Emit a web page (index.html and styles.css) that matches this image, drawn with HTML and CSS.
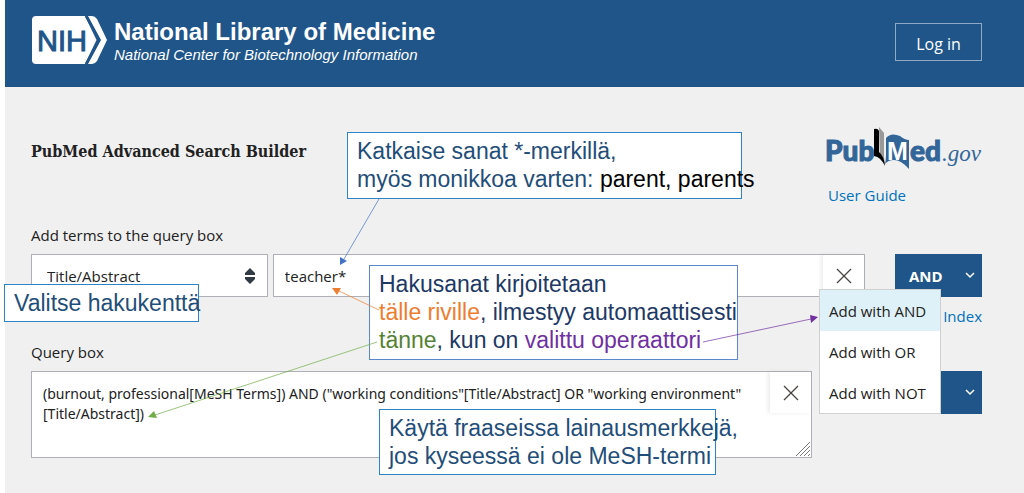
FILE: index.html
```html
<!DOCTYPE html>
<html lang="fi">
<head>
<meta charset="utf-8">
<title>PubMed Advanced Search Builder</title>
<link rel="stylesheet" href="styles.css">
</head>
<body>
<div class="page">

  <header class="header">
    <a class="brand" href="#">
      <svg class="nih-logo" width="75" height="48" viewBox="0 0 75 48" aria-hidden="true">
        <path d="M4 0H53L64.500 24L53 48H4Q0 48 0 44V4Q0 0 4 0Z" fill="#fff"/>
        <path d="M56 0H60Q63 0 65 3L75 24L65 45Q63 48 60 48H56L69 24Z" fill="#fff"/>
        <path d="M54 0L67 24L54 48" fill="none" stroke="#20558a" stroke-width="2.500"/>
        <text class="nih-text" x="5" y="35">NIH</text>
      </svg>
      <span class="brand-text">
        <span class="brand-name">National Library of Medicine</span>
        <span class="brand-sub">National Center for Biotechnology Information</span>
      </span>
    </a>
    <button class="login" type="button">Log in</button>
  </header>

  <main class="content">
    <div class="top">
      <h1>PubMed Advanced Search Builder</h1>
      <div class="pubmed">
        <svg class="pubmed-logo" width="158" height="46" viewBox="0 0 158 46" role="img" aria-label="PubMed.gov">
          <text class="logo-bold" x="1" y="35">Pub</text>
          <path d="M55 1L60 7V31L61 39L56 33Z" fill="#999"/>
          <path d="M50 3Q54 2 55 5V26Q60 30 61 40Q57 31 50 30Z" fill="#000"/>
          <path d="M62 12Q67 6 76 10Q81 14 85 14V43Q77 34 70 34Q64 34 61 38Q62 34 62 29Z" fill="#326699"/>
          <text class="logo-m" x="63" y="34">M</text>
          <text class="logo-bold" x="86" y="35">ed</text>
          <text class="logo-gov" x="118" y="35">.gov</text>
        </svg>
        <a class="guide" href="#">User Guide</a>
      </div>
    </div>

    <label class="label" for="term">Add terms to the query box</label>
    <div class="row">
      <div class="select-box">
        <select class="field" aria-label="Field">
          <option>Title/Abstract</option>
        </select>
        <svg class="sort" width="12" height="16" viewBox="0 0 12 16" aria-hidden="true">
          <path d="M6 0L11 5V7H1V5ZM1 9H11V11L6 16L1 11Z" fill="#323a45"/>
        </svg>
      </div>
      <div class="term-box">
        <input class="field" id="term" type="text" value="teacher*">
        <button class="clear" type="button" aria-label="Clear term">
          <svg width="16" height="16" viewBox="0 0 16 16"><path d="M1 1L15 15M15 1L1 15"/></svg>
        </button>
      </div>
      <div class="operator">
        <button class="blue-button" type="button">
          <span>AND</span>
          <svg class="chevron" width="10" height="7" viewBox="0 0 10 7"><path d="M1 1L5 5L9 1"/></svg>
        </button>
        <div class="menu">
          <button class="active" type="button">Add with AND</button>
          <button type="button">Add with OR</button>
          <button type="button">Add with NOT</button>
        </div>
      </div>
    </div>
    <a class="index" href="#">Index</a>

    <label class="label" for="query">Query box</label>
    <div class="row">
      <div class="query-box">
        <textarea id="query">(burnout, professional[MeSH Terms]) AND ("working conditions"[Title/Abstract] OR "working environment"
[Title/Abstract])</textarea>
        <button class="clear" type="button" aria-label="Clear query">
          <svg width="16" height="16" viewBox="0 0 16 16"><path d="M1 1L15 15M15 1L1 15"/></svg>
        </button>
        <svg class="grip" width="14" height="14" viewBox="0 0 14 14" aria-hidden="true">
          <path d="M0 14L14 0M4 14L14 4M8 14L14 8M12 14L14 12"/>
        </svg>
      </div>
      <button class="blue-button search" type="button" aria-label="Search">
        <svg class="chevron" width="10" height="7" viewBox="0 0 10 7"><path d="M1 1L5 5L9 1"/></svg>
      </button>
    </div>
  </main>

  <!-- ohjetekstit -->
  <div class="note note-field">Valitse hakukenttä</div>
  <div class="note note-truncate">Katkaise sanat *-merkillä,<br>myös monikkoa varten: <span class="black">parent, parents</span></div>
  <div class="note note-terms">Hakusanat kirjoitetaan<br><span class="orange">tälle riville</span>, ilmestyy automaattisesti<br><span class="green">tänne</span>, kun on <span class="purple">valittu operaattori</span></div>
  <div class="note note-phrase">Käytä fraaseissa lainausmerkkejä,<br>jos kyseessä ei ole MeSH-termi</div>

  <!-- nuolet -->
  <svg class="arrows" width="1024" height="493" viewBox="0 0 1024 493" aria-hidden="true">
    <g stroke="#4472c4" fill="#4472c4"><path class="line" d="M379 199L344 259"/><path class="head" d="M340 265L340 257L347 261Z"/></g>
    <g stroke="#ed7d31" fill="#ed7d31"><path class="line" d="M379 310L339 291"/><path class="head" d="M332 288L341 288L337 295Z"/></g>
    <g stroke="#70ad47" fill="#70ad47"><path class="line" d="M377 342L155 415"/><path class="head" d="M148 417L154 411L157 418Z"/></g>
    <g stroke="#7030a0" fill="#7030a0"><path class="line" d="M703 342L811 319"/><path class="head" d="M818 317L810 315L811 323Z"/></g>
  </svg>
</div>
</body>
</html>
```
FILE: styles.css
```css
* {
    box-sizing: border-box;
}
body {
    margin: 0;
    background-color: #fff;
    color: #212121;
    font-family: "Open Sans", sans-serif;
    font-size: 15px;
}
button, input, select, textarea {
    font-family: inherit;
    font-size: inherit;
    color: inherit;
    border-radius: 0;
}
a {
    color: #0071bc;
    text-decoration: none;
}
.page {
    position: relative;
    min-height: 100vh;
    padding-left: 5px;
    background: linear-gradient(to right, #fff 5px, #f0f0f0 5px);
}
.header {
    display: flex;
    justify-content: space-between;
    align-items: flex-start;
    height: 87px;
    padding: 16px 42px 0 27px;
    background-color: #20558a;
}
.brand {
    display: flex;
    gap: 7px;
    color: #fff;
    font-family: "Liberation Sans", Arial, sans-serif;
}
.nih-text {
    fill: #20558a;
    stroke: #20558a;
    stroke-width: 1px;
    font-size: 29px;
}
.brand-text {
    display: flex;
    flex-direction: column;
    padding-top: 3px;
}
.brand-name {
    font-size: 24px;
    font-weight: bold;
    line-height: 26px;
}
.brand-sub {
    font-size: 15px;
    font-style: italic;
    line-height: 20px;
}
.login {
    width: 87px;
    height: 38px;
    margin-top: 7px;
    padding-top: 4px;
    border: 1px solid #90aac5;
    background: none;
    color: #fff;
    font-size: 16px;
}
.content {
    padding: 39px 42px 34px 26px;
}
.top {
    display: flex;
    justify-content: space-between;
    height: 99px;
}
h1 {
    margin: 16px 0 0;
    font-family: "DejaVu Serif Condensed", "DejaVu Serif", serif;
    font-size: 16px;
    line-height: 20px;
}
.pubmed {
    display: flex;
    flex-direction: column;
}
.guide {
    margin-top: 13px;
    padding-left: 4px;
    line-height: 20px;
}
.logo-bold {
    fill: #326699;
    stroke: #326699;
    stroke-width: 1px;
    font-family: Lato, sans-serif;
    font-size: 28px;
    font-weight: 900;
}
.logo-m {
    fill: #fff;
    font-family: "Liberation Sans", Arial, sans-serif;
    font-size: 25px;
    font-weight: bold;
}
.logo-gov {
    fill: #326699;
    font-family: "Liberation Serif", serif;
    font-size: 23px;
    font-style: italic;
}
.label {
    display: block;
    height: 29px;
    line-height: 20px;
}
.row {
    display: flex;
}
.select-box {
    position: relative;
    flex: 2;
    margin-right: 5px;
}
.term-box {
    position: relative;
    flex: 5;
}
.field, textarea {
    display: block;
    width: 100%;
    border: 1px solid #aeb0b5;
    background-color: #fff;
    outline: none;
}
.field {
    height: 43px;
    padding: 0 11px;
}
select.field {
    appearance: none;
    padding-left: 15px;
}
.sort {
    position: absolute;
    right: 12px;
    top: 14px;
}
.clear {
    position: absolute;
    right: 1px;
    top: 1px;
    width: 41px;
    height: 41px;
    padding: 4px 0 0;
    border: none;
    background-color: #fff;
    box-shadow: -2px 0 4px rgba(0, 0, 0, 0.08);
}
.clear path {
    stroke: #494440;
    stroke-width: 1.300;
}
.operator {
    position: relative;
    margin-left: 30px;
}
.blue-button {
    display: flex;
    justify-content: space-between;
    align-items: center;
    width: 87px;
    height: 43px;
    padding: 0 7px 0 14px;
    border: none;
    background-color: #20558a;
    color: #fff;
    font-weight: bold;
}
.chevron path {
    fill: none;
    stroke: #fff;
    stroke-width: 1.500;
}
.menu {
    position: absolute;
    right: 41px;
    top: 35px;
    z-index: 2;
    width: 122px;
    border: 1px solid #d0d0d0;
    background-color: #fff;
}
.menu button {
    display: block;
    width: 100%;
    height: 41px;
    padding: 0 0 0 9px;
    border: none;
    background: none;
    text-align: left;
    white-space: nowrap;
}
.menu .active {
    background-color: #dff1f8;
}
.index {
    display: block;
    margin: 9px 0 16px;
    text-align: right;
    line-height: 20px;
}
.query-box {
    position: relative;
    flex: 1;
}
textarea {
    height: 87px;
    padding: 12px 40px 0 11px;
    font-family: "Noto Sans", sans-serif;
    font-size: 14px;
    line-height: 20px;
    resize: none;
    overflow: hidden;
}
.grip {
    position: absolute;
    right: 2px;
    bottom: 2px;
}
.grip path {
    stroke: #777;
}
.search {
    justify-content: flex-end;
    width: 140px;
    margin-left: 30px;
}

/* ohjelaatikot kuvan päällä */
.note {
    position: absolute;
    padding: 4px 9px;
    border: 1px solid #2e83c4;
    background-color: #fff;
    color: #1f4e79;
    font-family: "Liberation Sans", Arial, sans-serif;
    font-size: 23px;
    line-height: 28px;
    white-space: nowrap;
}
.note-field {
    left: 4px;
    top: 284px;
    width: 195px;
    height: 38px;
}
.note-truncate {
    left: 347px;
    top: 132px;
    width: 395px;
    height: 67px;
}
.note-terms {
    left: 369px;
    top: 265px;
    width: 369px;
    height: 95px;
    border-color: #5b87cf;
    color: #203864;
}
.note-phrase {
    left: 379px;
    top: 409px;
    width: 337px;
    height: 66px;
}
.black {
    color: #000;
}
.orange {
    color: #ed7d31;
}
.green {
    color: #548235;
}
.purple {
    color: #7030a0;
}
.arrows {
    position: absolute;
    left: 0;
    top: 0;
    z-index: 3;
    pointer-events: none;
}
.line {
    fill: none;
    stroke-width: 0.700;
}
.head {
    stroke: none;
}
```
